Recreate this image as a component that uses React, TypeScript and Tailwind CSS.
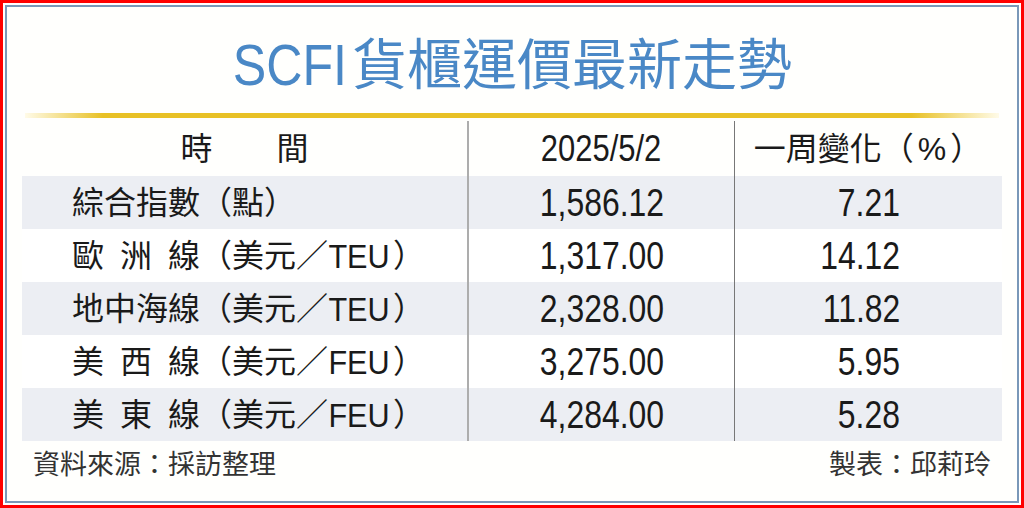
const rows = [
  { label: <>綜合指數（點）</>, value: "1,586.12", change: "7.21" },
  {
    label: (
      <>
        歐<Gap />洲<Gap />線（美元／<Narrow>TEU</Narrow>）
      </>
    ),
    value: "1,317.00",
    change: "14.12",
  },
  { label: <>地中海線（美元／<Narrow>TEU</Narrow>）</>, value: "2,328.00", change: "11.82" },
  {
    label: (
      <>
        美<Gap />西<Gap />線（美元／<Narrow>FEU</Narrow>）
      </>
    ),
    value: "3,275.00",
    change: "5.95",
  },
  {
    label: (
      <>
        美<Gap />東<Gap />線（美元／<Narrow>FEU</Narrow>）
      </>
    ),
    value: "4,284.00",
    change: "5.28",
  },
];

function Gap() {
  return <span className="inline-block w-4" />;
}

// the latin face in the chart is condensed, so squeeze Arial a bit
function Narrow({ children }: { children: React.ReactNode }) {
  return <span className="inline-block text-[34px] leading-none scale-x-[0.9] -ml-[3px]">{children}</span>;
}

export default function App() {
  return (
    <div className="w-[1024px] h-[508px] border-[3px] border-[#ff0000] bg-white p-[2px] font-['Liberation_Sans','Noto_Sans_CJK_TC',sans-serif]">
      <div className="h-full border-2 border-[#7a98b8] bg-[#fffffd] flex flex-col">
        <div className="h-[106px] flex items-center justify-center pt-[10px] text-[#4a88c6] leading-none">
          <span className="inline-block text-[57px] scale-x-[0.88] -mx-[7px]">SCFI</span>
          <span className="text-[55px] ml-[4px]">貨櫃運價最新走勢</span>
        </div>
        <div className="mx-[18px] h-[5px] bg-[linear-gradient(to_right,#fffbe8_0%,#e8c125_8%,#e8c125_91%,#fffbe8_100%)]" />

        <div className="mx-[15px] text-[#1a1a1a]">
          <div className="grid grid-cols-[445px_267px_267px] h-[58px] pt-[3px]">
            <div className="flex items-center justify-center text-[32px] leading-none">時　　間</div>
            <div className="flex items-center justify-center border-l-2 border-[#adadad]">
              <span className="inline-block text-[36px] leading-none scale-x-[0.86]">2025/5/2</span>
            </div>
            <div className="flex items-center justify-center border-l border-[#777]">
              <span className="text-[32px] leading-none">
                一周變化（<span className="mx-[4px]">%</span>）
              </span>
            </div>
          </div>
          {rows.map((r, i) => (
            <div
              key={i}
              className={`grid grid-cols-[445px_267px_267px] h-[53px] ${i % 2 === 0 ? "bg-[#eceef3]" : "bg-white"}`}
            >
              <div className="flex items-center pl-[50px] text-[32px] leading-none whitespace-nowrap">{r.label}</div>
              <div className="flex items-center justify-center border-l-2 border-[#adadad]">
                <span className="inline-block text-[38px] leading-none scale-x-[0.84]">{r.value}</span>
              </div>
              <div className="flex items-center justify-end pr-[101px] border-l border-[#777]">
                <span className="inline-block text-[38px] leading-none scale-x-[0.84] origin-right">{r.change}</span>
              </div>
            </div>
          ))}
        </div>

        <div className="flex justify-between pt-[11px] px-[26px] text-[27px] leading-none text-[#333]">
          <span>資料來源：採訪整理</span>
          <span>製表：邱莉玲</span>
        </div>
      </div>
    </div>
  );
}
